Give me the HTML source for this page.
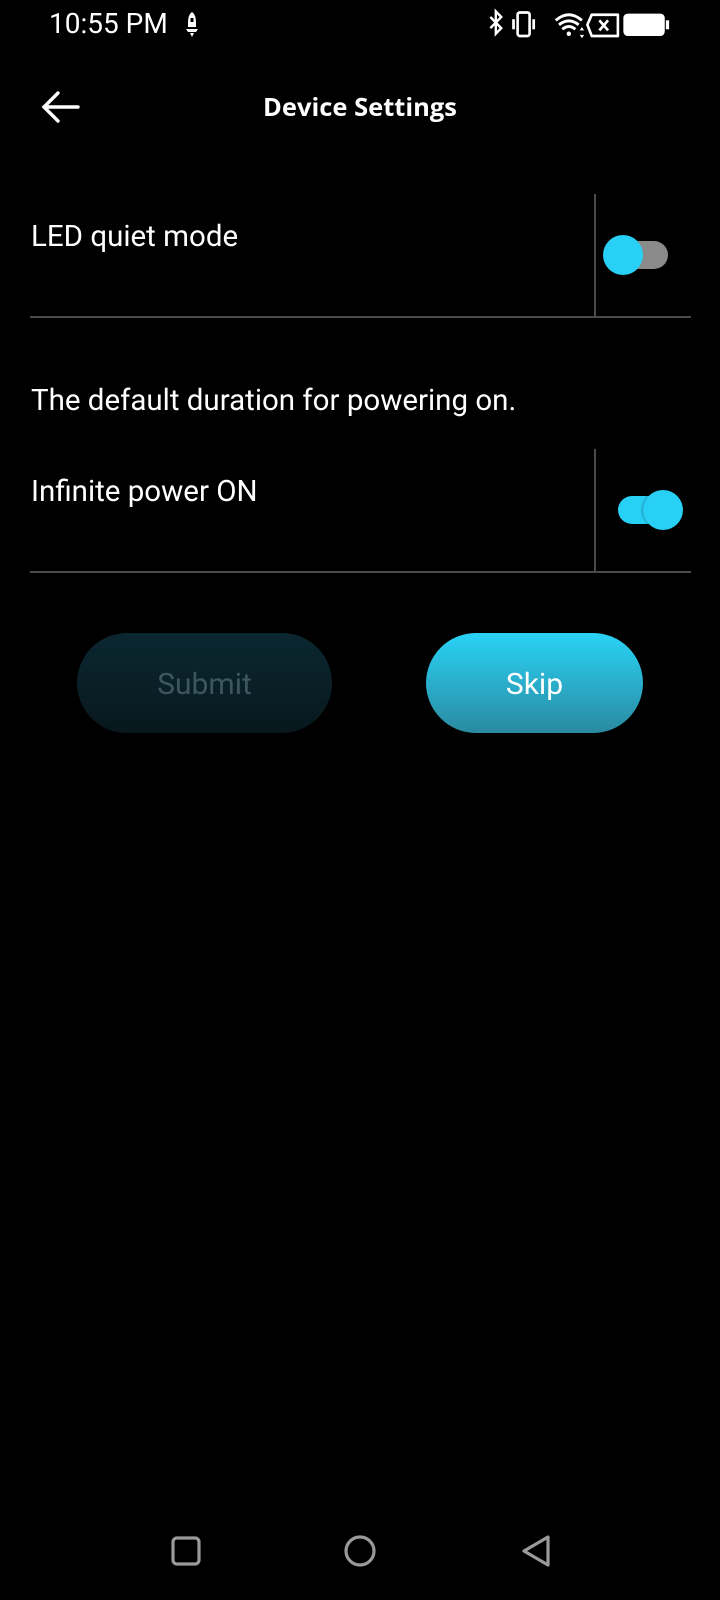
<!DOCTYPE html>
<html><head><meta charset="utf-8"><style>
*{margin:0;padding:0;box-sizing:border-box}
body{width:720px;height:1600px;background:#000;position:relative;overflow:hidden;font-family:"Roboto","Liberation Sans",sans-serif;color:#fff}
.a{position:absolute}
.t{font-size:29.5px;white-space:nowrap}
.line{background:#4a4a4a}
</style></head><body>
<div class="a" style="left:49px;top:7px;font-size:28px">10:55 PM</div>
<svg class="a" style="left:182px;top:11px" width="20" height="28" viewBox="0 0 20 28"><path d="M10 1 C6 4 6 8 6 16 L14 16 C14 8 14 4 10 1Z M4 18 L16 18 L14 21 L6 21Z M8 22 L12 22 L10 26Z" fill="#fff"/><rect x="8.5" y="7" width="3" height="4" fill="#000"/></svg>
<svg class="a" style="left:486px;top:8px" width="190" height="32" viewBox="0 0 190 30" preserveAspectRatio="none">
<g transform="scale(1.09,1.05)">
<path d="M4 8 L14 18 L9 23 L9 3 L14 8 L4 18" stroke="#fff" stroke-width="2.2" fill="none"/>
<rect x="29" y="4" width="11" height="21" rx="2" stroke="#fff" stroke-width="2.4" fill="none"/>
<rect x="24" y="10" width="2.5" height="9" fill="#fff"/><rect x="42.5" y="10" width="2.5" height="9" fill="#fff"/>
<path d="M64 11 Q76 1 88 11 M67 15 Q76 8 85 15 M70 19 Q76 14 82 19" stroke="#fff" stroke-width="2.6" fill="none"/>
<circle cx="76" cy="23" r="2" fill="#fff"/>
<path d="M86 20 l2 -3 l2 3z M86 24 l2 3 l2 -3z" fill="#fff"/>
<path d="M97 6 L121 6 L121 25 L97 25 L93 15Z" stroke="#fff" stroke-width="2.4" fill="none" stroke-linejoin="round"/>
<path d="M104 11 l8 9 M112 11 l-8 9" stroke="#fff" stroke-width="2.4"/>
<rect x="126" y="5" width="38" height="20" rx="4" fill="#fff"/><rect x="165" y="11" width="3" height="8" fill="#fff"/>
</g>
</svg>
<svg class="a" style="left:40px;top:90px" width="42" height="34" viewBox="0 0 42 34"><path d="M38 17 L4 17 M18 3 L4 17 L18 31" stroke="#fff" stroke-width="3.4" fill="none" stroke-linecap="round"/></svg>
<div class="a" style="left:0;width:720px;text-align:center;top:90px;font-size:25.5px;font-weight:bold;font-family:'Open Sans','DejaVu Sans',sans-serif">Device Settings</div>

<div class="a t" style="left:31px;top:220px">LED quiet mode</div>
<div class="a line" style="left:594px;top:194px;width:2px;height:123px"></div>
<div class="a line" style="left:30px;top:316px;width:661px;height:2px"></div>
<div class="a" style="left:612px;top:241px;width:56px;height:28px;border-radius:14px;background:#8a8a8a"></div>
<div class="a" style="left:603px;top:235px;width:40px;height:40px;border-radius:50%;background:#29d0f5"></div>

<div class="a t" style="left:31px;top:384px">The default duration for powering on.</div>
<div class="a t" style="left:31px;top:475px">Infinite power ON</div>
<div class="a line" style="left:594px;top:449px;width:2px;height:123px"></div>
<div class="a line" style="left:30px;top:571px;width:661px;height:2px"></div>
<div class="a" style="left:618px;top:496px;width:56px;height:28px;border-radius:14px;background:#29d0f5"></div>
<div class="a" style="left:643px;top:490px;width:40px;height:40px;border-radius:50%;background:#29d0f5;box-shadow:-1px 0 2px rgba(0,0,0,.3)"></div>

<div class="a" style="left:77px;top:633px;width:255px;height:100px;border-radius:50px;background:linear-gradient(#0b2731,#08181d);color:#3c5660;font-size:30px;text-align:center;line-height:104px">Submit</div>
<div class="a" style="left:426px;top:633px;width:217px;height:100px;border-radius:50px;background:linear-gradient(#29d3f7,#2a8aa0);color:#fff;font-size:30px;text-align:center;line-height:104px">Skip</div>

<svg class="a" style="left:0;top:1530px" width="720" height="50" viewBox="0 0 720 50">
<rect x="173" y="8" width="26" height="26" rx="4" stroke="#9a9a9a" stroke-width="3.2" fill="none"/>
<circle cx="360" cy="21" r="14" stroke="#9a9a9a" stroke-width="3.2" fill="none"/>
<path d="M548 7 L548 35 L524 21Z" stroke="#9a9a9a" stroke-width="3.2" fill="none" stroke-linejoin="round"/>
</svg>
</body></html>
